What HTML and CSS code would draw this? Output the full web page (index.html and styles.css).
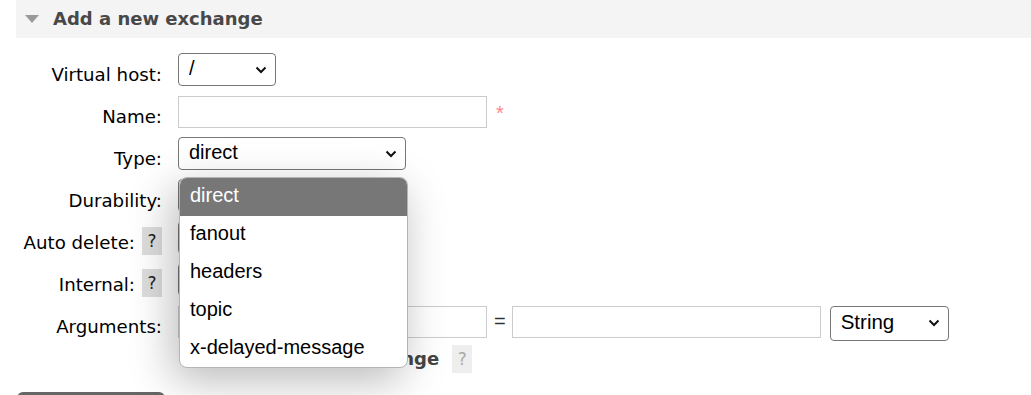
FILE: index.html
```html
<!DOCTYPE html>
<html lang="en">
<head>
  <meta charset="UTF-8">
  <title>Exchanges - RabbitMQ Management</title>
  <link rel="stylesheet" href="styles.css">
</head>
<body>
  <div class="section">
    <h2 class="section-title"><span class="arrow"></span>Add a new exchange</h2>

    <form class="form-grid">
      <label class="field-label">Virtual host:</label>
      <div class="field">
        <span class="sel-wrap">
          <select class="sel sel-vhost"><option>/</option></select>
          <svg class="chev" width="12" height="8" viewBox="0 0 12 8"><path d="M1.5 1.5 L6 6 L10.5 1.5" fill="none" stroke="#111" stroke-width="2"/></svg>
        </span>
      </div>

      <label class="field-label">Name:</label>
      <div class="field">
        <input type="text" class="txt txt-name">
        <span class="mand">*</span>
      </div>

      <label class="field-label">Type:</label>
      <div class="field field-type">
        <span class="sel-wrap">
          <select class="sel sel-type"><option>direct</option></select>
          <svg class="chev" width="12" height="8" viewBox="0 0 12 8"><path d="M1.5 1.5 L6 6 L10.5 1.5" fill="none" stroke="#111" stroke-width="2"/></svg>
        </span>
        <!-- open listbox of the type select -->
        <ul class="listbox">
          <li class="active">direct</li>
          <li>fanout</li>
          <li>headers</li>
          <li>topic</li>
          <li>x-delayed-message</li>
        </ul>
      </div>

      <label class="field-label">Durability:</label>
      <div class="field">
        <select class="sel sel-small"><option>Durable</option></select>
      </div>

      <label class="field-label">Auto delete: <span class="help">?</span></label>
      <div class="field">
        <select class="sel sel-small"><option>No</option></select>
      </div>

      <label class="field-label">Internal: <span class="help">?</span></label>
      <div class="field">
        <select class="sel sel-small"><option>No</option></select>
      </div>

      <label class="field-label">Arguments:</label>
      <div class="field">
        <input type="text" class="txt txt-arg">
        <span class="eq">=</span>
        <input type="text" class="txt txt-arg">
        <span class="sel-wrap sel-string-wrap">
          <select class="sel sel-string"><option>String</option></select>
          <svg class="chev" width="12" height="8" viewBox="0 0 12 8"><path d="M1.5 1.5 L6 6 L10.5 1.5" fill="none" stroke="#111" stroke-width="2"/></svg>
        </span>
      </div>

      <span></span>
      <div class="field extra">
        <span class="extra-text">Add Alternate exchange</span>
        <span class="help help-off">?</span>
      </div>
    </form>

    <button class="add-btn" type="button">Add exchange</button>
  </div>
</body>
</html>
```

FILE: styles.css
```css
body {
  margin: 0;
  padding: 0;
  font-family: "DejaVu Sans", Verdana, sans-serif;
  color: #000;
  background: #fff;
  overflow: hidden;
}

.section {
  padding-left: 16px;
}

.section-title {
  margin: 0;
  height: 38px;
  display: flex;
  align-items: center;
  background: #f4f4f4;
  color: #484848;
  font-size: 18px;
  font-weight: bold;
  padding-left: 9px;
  padding-bottom: 1px;
  box-sizing: border-box;
}

.arrow {
  width: 0;
  height: 0;
  border-left: 7.5px solid transparent;
  border-right: 7.5px solid transparent;
  border-top: 8px solid #999;
  margin-right: 14px;
  margin-top: 1px;
}

.form-grid {
  display: grid;
  grid-template-columns: 146px 1fr;
  grid-auto-rows: 33px;
  column-gap: 16px;
  row-gap: 9px;
  margin-top: 15px;
}

.field-label {
  display: flex;
  justify-content: flex-end;
  align-items: center;
  gap: 7px;
  padding-top: 9px;
  font-size: 18.2px;
  white-space: nowrap;
}

.field {
  display: flex;
  align-items: center;
  font-family: "Liberation Sans", Arial, sans-serif;
}

.sel-wrap {
  position: relative;
  display: inline-flex;
}

.chev {
  position: absolute;
  right: 9px;
  top: 50%;
  margin-top: -4px;
  pointer-events: none;
}

.sel {
  -webkit-appearance: none;
  appearance: none;
  font-family: "Liberation Sans", Arial, sans-serif;
  font-size: 20px;
  height: 33px;
  padding: 0 6px 3px 10px;
  color: #000;
  background: #fff;
  border: 1px solid #767676;
  border-radius: 4px;
}

.sel-vhost { width: 98px; }
.sel-type { width: 228px; }
.sel-small { width: 130px; }
.sel-string { width: 119px; height: 35px; font-size: 20.5px; }
.sel-string-wrap { margin-left: 9px; margin-top: 3px; }

.txt {
  height: 32px;
  box-sizing: border-box;
  border: 1px solid #ccc;
  padding: 0 6px;
  font-size: 18px;
  margin: 0;
}

.txt-name { width: 309px; }
.txt-arg { width: 309px; }

.mand {
  color: #f88;
  font-size: 20px;
  margin-left: 9px;
  margin-top: 3px;
}

.eq {
  font-size: 20px;
  color: #333;
  margin: 0 6px 0 7px;
}

.help {
  display: inline-flex;
  align-items: center;
  justify-content: center;
  width: 20px;
  height: 28px;
  background: #ddd;
  color: #222;
  font-size: 17px;
  font-weight: normal;
  font-family: "DejaVu Sans", Verdana, sans-serif;
  margin-top: -3px;
}

.help-off {
  background: #eee;
  color: #aaa;
  margin-top: 0;
}

.extra {
  font-family: "DejaVu Sans", Verdana, sans-serif;
  color: #444;
  font-size: 18px;
  font-weight: bold;
  margin-top: -10px;
}

.extra-text {
  margin-left: 16px;
  margin-right: 13px;
}

.field-type {
  position: relative;
}

.listbox {
  position: absolute;
  top: 40px;
  left: 1px;
  width: 227px;
  margin: 0;
  padding: 0;
  list-style: none;
  background: #fff;
  border: 1px solid #b4b4b4;
  border-radius: 8px;
  overflow: hidden;
  box-shadow: -6px 12px 44px rgba(0, 0, 0, 0.28);
  z-index: 5;
  font-size: 20px;
}

.listbox li {
  height: 38px;
  line-height: 34px;
  padding-left: 10px;
}

.listbox li:last-child {
  height: 37px;
}

.listbox li.active {
  background: #777;
  color: #fff;
}

.add-btn {
  display: block;
  margin-top: 12px;
  margin-left: 1px;
  width: 148px;
  height: 34px;
  border: none;
  border-radius: 6px;
  background: #666;
  color: #fff;
  font-family: "DejaVu Sans", Verdana, sans-serif;
  font-size: 16px;
}
```
